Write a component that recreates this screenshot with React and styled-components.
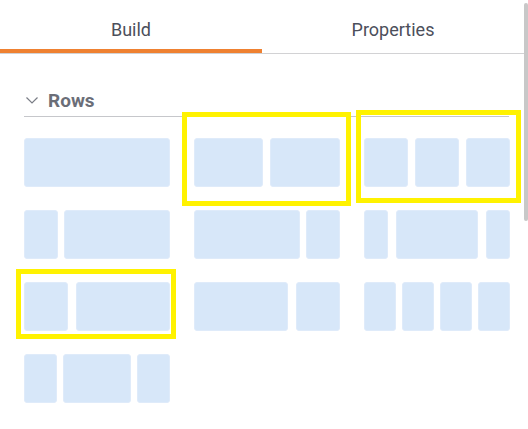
import React from "react";
import styled, { createGlobalStyle } from "styled-components";

const Global = createGlobalStyle`
  html, body { margin: 0; padding: 0; background: #fff; overflow: hidden; }
  body { font-family: Roboto, "Liberation Sans", sans-serif; }
`;

const Frame = styled.div`
  display: flex;
  width: 528px;
  height: 429px;
  background: #fff;
`;

const Panel = styled.div`
  width: 524px;
  display: flex;
  flex-direction: column;
`;

const ScrollTrack = styled.div`
  width: 4px;
  padding-top: 3px;
`;

const ScrollThumb = styled.div`
  height: 218px;
  border-radius: 2px;
  background: #c8c8c8;
`;

const TabBar = styled.div`
  display: flex;
  border-bottom: 1px solid #d2d2d4;
`;

const Tab = styled.div`
  flex: 1;
  height: 53px;
  box-sizing: border-box;
  padding-top: 18px;
  line-height: 24px;
  font-size: 18px;
  color: #4c4f5b;
  text-align: center;
  border-bottom: 4px solid ${(p) => (p.$active ? "#ef8131" : "transparent")};
`;

const Section = styled.div`
  padding: 30px 15px 0 24px;
`;

const SectionHeader = styled.div`
  display: flex;
  align-items: center;
  height: 32px;
  border-bottom: 1px solid #c6c7cb;
  gap: 9px;
  font-size: 19px;
  font-weight: 700;
  color: #6b6e78;
`;

const Chevron = styled.svg`
  width: 14px;
  height: 14px;
  margin-left: 1px;
`;

const Grid = styled.div`
  display: grid;
  grid-template-columns: repeat(3, 146px);
  column-gap: 24px;
  row-gap: 23px;
  margin-top: 21px;
`;

const Cell = styled.div`
  position: relative;
  height: 49px;
  display: flex;
  gap: ${(p) => p.$gap}px;
`;

const Block = styled.div`
  flex: 0 0 ${(p) => p.$w}px;
  box-sizing: border-box;
  height: 100%;
  background: #d7e7f9;
  border: 1px solid #dfebfa;
  border-radius: 3px;
`;

const Highlight = styled.div`
  position: absolute;
  left: ${(p) => p.$x}px;
  top: ${(p) => p.$y}px;
  width: ${(p) => p.$w}px;
  height: ${(p) => p.$h}px;
  box-sizing: border-box;
  border: 5px solid #fff200;
  pointer-events: none;
`;

const layouts = [
  { blocks: [146], gap: 0 },
  { blocks: [69, 70], gap: 7, hl: { x: -12, y: -26, w: 169, h: 94 } },
  { blocks: [44, 44, 44], gap: 7, hl: { x: -8, y: -28, w: 165, h: 93 } },
  { blocks: [34, 106], gap: 6 },
  { blocks: [106, 34], gap: 6 },
  { blocks: [24, 82, 24], gap: 8 },
  { blocks: [44, 94], gap: 8, hl: { x: -8, y: -13, w: 160, h: 70 } },
  { blocks: [94, 44], gap: 8 },
  { blocks: [32, 32, 32, 32], gap: 6 },
  { blocks: [33, 68, 33], gap: 6 },
];

export default function App() {
  return (
    <>
      <Global />
      <Frame>
        <Panel>
          <TabBar>
            <Tab $active>Build</Tab>
            <Tab>Properties</Tab>
          </TabBar>
          <Section>
            <SectionHeader>
              <Chevron viewBox="0 0 14 14" fill="none" stroke="#7a7d86" strokeWidth="1.2">
                <path d="M1.5 4.5 L7 10 L12.5 4.5" />
              </Chevron>
              Rows
            </SectionHeader>
            <Grid>
              {layouts.map((l, i) => (
                <Cell key={i} $gap={l.gap}>
                  {l.blocks.map((w, j) => (
                    <Block key={j} $w={w} />
                  ))}
                  {l.hl && <Highlight $x={l.hl.x} $y={l.hl.y} $w={l.hl.w} $h={l.hl.h} />}
                </Cell>
              ))}
            </Grid>
          </Section>
        </Panel>
        <ScrollTrack>
          <ScrollThumb />
        </ScrollTrack>
      </Frame>
    </>
  );
}
